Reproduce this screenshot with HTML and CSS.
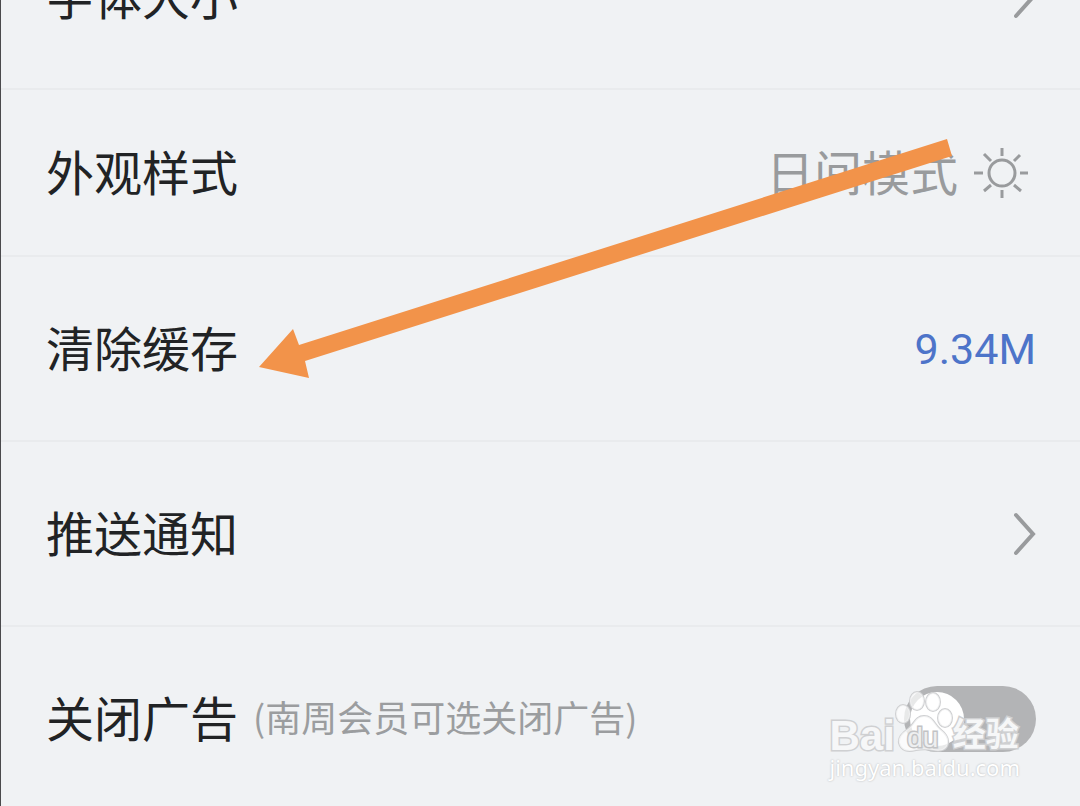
FILE: index.html
```html
<!DOCTYPE html>
<html lang="zh-CN">

<head>
    <meta charset="UTF-8">
    <meta name="viewport" content="width=device-width, initial-scale=1.0">
    <title>设置</title>
    <link rel="stylesheet" href="styles.css">
</head>

<body>
    <main class="settings">
        <!-- Font size, scrolled half out of view -->
        <button class="row" type="button">
            <span class="label">字体大小</span>
            <svg class="chevron" viewBox="0 0 24 44" aria-hidden="true">
                <path d="M4 3L21 22L4 41"/>
            </svg>
        </button>

        <!-- Day / night mode -->
        <button class="row row-mode" type="button">
            <span class="label">外观样式</span>
            <span class="mode">
                <span class="mode-name">日间模式</span>
                <svg class="sun" viewBox="0 0 56 52" aria-hidden="true">
                    <circle cx="28" cy="26" r="13"/>
                    <path d="M28 1V9M28 43V51M0 26H9M46 26H54M10 7L17 14M46 8L40 14M10 44L17 38M47 44L40 38"/>
                </svg>
            </span>
        </button>

        <!-- Cache -->
        <button class="row" type="button">
            <span class="label">清除缓存</span>
            <span class="size">9.34M</span>
        </button>

        <!-- Push messages -->
        <button class="row" type="button">
            <span class="label">推送通知</span>
            <svg class="chevron" viewBox="0 0 24 44" aria-hidden="true">
                <path d="M4 3L21 22L4 41"/>
            </svg>
        </button>

        <!-- Ads switch -->
        <div class="row">
            <label class="label" for="ads">关闭广告<span class="hint">(南周会员可选关闭广告)</span></label>
            <input class="switch" type="checkbox" role="switch" id="ads">
        </div>
    </main>

    <!-- Arrow to the cache row -->
    <svg class="arrow" viewBox="0 0 694 240" aria-hidden="true">
        <path d="M688 0L693 17L46 222L50 239L0 228L34 190L40 206Z"/>
    </svg>

    <!-- Baidu watermark -->
    <div class="watermark">
        <div class="brand">
            <span class="bai">Bai</span>
            <span class="paw">
                <svg viewBox="0 0 58 62" aria-hidden="true">
                    <ellipse cx="8" cy="24" rx="7" ry="9"/>
                    <ellipse cx="22" cy="11" rx="7" ry="9"/>
                    <ellipse cx="38" cy="12" rx="7" ry="9"/>
                    <ellipse cx="50" cy="28" rx="7" ry="9"/>
                    <path d="M29 26C20 26 19 35 13 39C7 43 3 47 4 53C6 61 13 62 21 60C27 59 32 59 38 60C45 62 52 60 53 53C54 47 50 43 45 39C39 34 38 26 29 26Z"/>
                </svg>
                <span class="du">du</span>
            </span>
            <span class="jingyan">经验</span>
        </div>
        <div class="site">jingyan.baidu.com</div>
    </div>
</body>

</html>
```
FILE: styles.css
```css
* {
    box-sizing: border-box;
}

body {
    margin: 0;
    height: 100vh;
    overflow: hidden;
    position: relative;
    background-color: #f0f2f4;
    font-family: "Noto Sans CJK SC", sans-serif;
}

/* Settings list */
.settings {
    margin-top: -95px;
    border-left: 1px solid #4a4a4c;
}

.row {
    display: flex;
    align-items: center;
    justify-content: space-between;
    width: 100%;
    height: 185px;
    padding: 0 44px 0 45px;
    border: 0;
    border-bottom: 2px solid #e9ebed;
    background: none;
    font-family: inherit;
    text-align: left;
}

.row-mode {
    height: 167px;
}

.label {
    display: flex;
    align-items: center;
    gap: 15px;
    padding-bottom: 6px;
    font-size: 48px;
    line-height: 72px;
    color: #212325;
}

.hint {
    font-size: 36px;
    color: #9b9d9f;
}

.mode {
    display: flex;
    align-items: center;
    gap: 16px;
    padding-right: 6px;
}

.mode-name {
    padding-bottom: 6px;
    font-size: 48px;
    line-height: 72px;
    color: #999b9d;
}

.size {
    font-family: Roboto, sans-serif;
    font-size: 43px;
    color: #4d74c9;
}

.chevron {
    width: 24px;
    height: 44px;
    fill: none;
    stroke: #999b9d;
    stroke-width: 4;
    stroke-linecap: round;
}

.sun {
    width: 56px;
    height: 52px;
    fill: none;
    stroke: #999b9d;
    stroke-width: 3;
}

/* Ads switch */
.switch {
    appearance: none;
    display: flex;
    align-items: center;
    width: 132px;
    height: 66px;
    margin: 0;
    padding: 6px;
    border-radius: 33px;
    background-color: #b3b4b6;
}

.switch::before {
    content: "";
    width: 54px;
    height: 54px;
    border-radius: 50%;
    background-color: #fff;
}

/* Arrow */
.arrow {
    position: absolute;
    top: 139px;
    right: 127px;
    width: 694px;
    height: 240px;
    fill: #f2934a;
    pointer-events: none;
}

/* Watermark */
.watermark {
    position: absolute;
    right: 60px;
    bottom: 24px;
    color: #f6f7f8;
    font-family: "Noto Sans", "Noto Sans CJK SC", sans-serif;
    pointer-events: none;
}

.brand {
    display: flex;
    align-items: flex-end;
    height: 62px;
    -webkit-text-stroke: 3px #cfd0d2;
    paint-order: stroke fill;
}

.bai {
    font-family: "Liberation Sans", sans-serif;
    font-size: 42px;
    font-weight: bold;
    line-height: 32px;
}

.paw {
    position: relative;
    width: 58px;
    height: 62px;
}

.paw svg {
    width: 58px;
    height: 62px;
    fill: rgba(255, 255, 255, 0.7);
    stroke: #cfd0d2;
    stroke-width: 2;
}

.du {
    position: absolute;
    inset: 35px 2px 0 0;
    text-align: center;
    font-family: "Liberation Sans", sans-serif;
    font-size: 28px;
    line-height: 26px;
    color: #eeeff0;
    -webkit-text-stroke: 3px #c2c3c5;
}

.jingyan {
    font-size: 33px;
    font-weight: bold;
    line-height: 36px;
}

.site {
    font-size: 22px;
    line-height: 30px;
    color: #fff;
    text-shadow: 0 0 2px #b0b1b3;
}
```
